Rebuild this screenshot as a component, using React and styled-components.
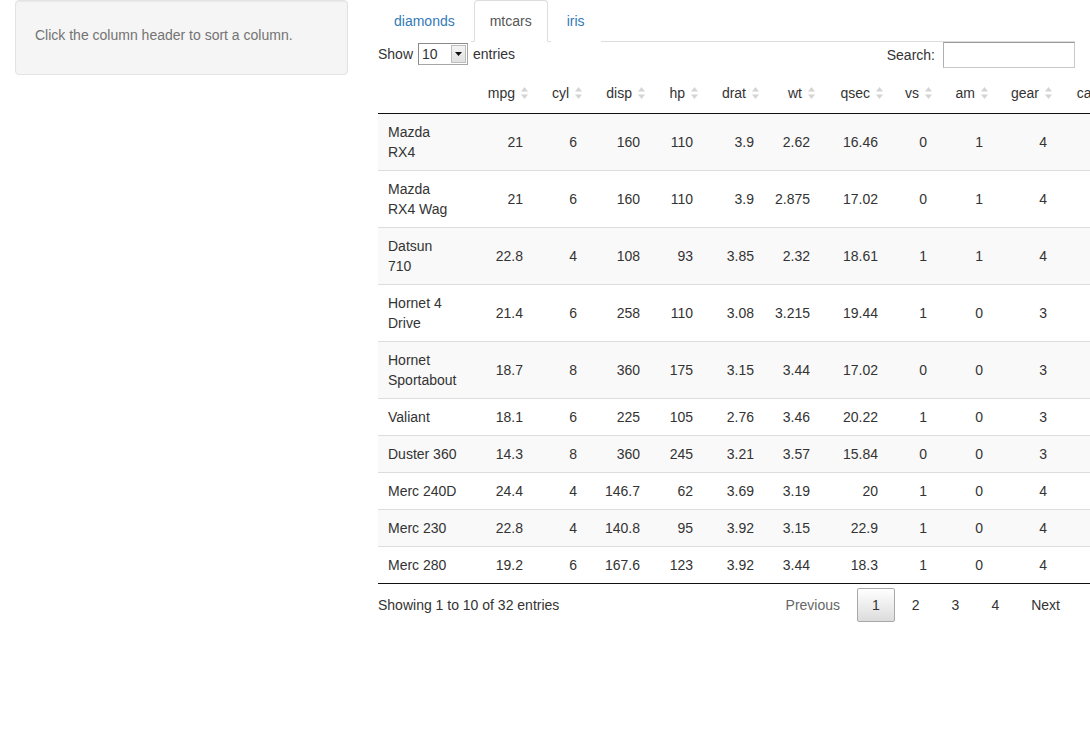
import styled, { createGlobalStyle } from "styled-components";

const GlobalStyle = createGlobalStyle`
  html, body {
    margin: 0;
    padding: 0;
    overflow: hidden;
    background: #fff;
  }
  body {
    font-family: "Liberation Sans", Helvetica, Arial, sans-serif;
    font-size: 14px;
    line-height: 20px;
    color: #333;
  }
`;

const Page = styled.div`
  display: grid;
  grid-template-columns: 333px 697px;
  column-gap: 30px;
  padding: 0 15px;
  align-items: start;
`;

const Well = styled.div`
  background: #f5f5f5;
  border: 1px solid #e3e3e3;
  border-radius: 4px;
  box-shadow: inset 0 1px 1px rgba(0, 0, 0, 0.05);
  padding: 19px;
`;

const HelpText = styled.span`
  display: block;
  margin: 5px 0 10px;
  color: #737373;
`;

const Main = styled.div`
  min-width: 0;
`;

const Tabs = styled.ul`
  display: flex;
  list-style: none;
  margin: 0;
  padding: 0;
  border-bottom: 1px solid #ddd;
`;

const Tab = styled.li`
  margin-bottom: -1px;
  margin-right: 3px;
  padding: 10px 15px;
  border: 1px solid ${(p) => (p.$active ? "#ddd" : "transparent")};
  border-bottom-color: transparent;
  border-radius: 4px 4px 0 0;
  background: #fff;
  color: ${(p) => (p.$active ? "#555" : "#337ab7")};
  cursor: pointer;
`;

const Controls = styled.div`
  display: flex;
  justify-content: space-between;
  align-items: flex-start;
  height: 31px;
`;

const Length = styled.div`
  display: flex;
  align-items: center;
  gap: 5px;
  height: 24px;
`;

const FakeSelect = styled.div`
  display: flex;
  align-items: center;
  justify-content: space-between;
  box-sizing: border-box;
  width: 50px;
  height: 22px;
  border: 1px solid #a6a6a6;
  border-top-color: #8a8a8a;
  border-left-color: #8a8a8a;
  background: #fff;
  padding: 0 1px 0 3px;
`;

const SelectArrow = styled.span`
  display: flex;
  align-items: center;
  justify-content: center;
  width: 15px;
  height: 18px;
  background: linear-gradient(#f4f4f4, #e0e0e0);
  border: 1px solid #bdbdbd;
  box-sizing: border-box;
`;

const Filter = styled.label`
  display: flex;
  align-items: center;
  gap: 8px;
  height: 26px;
`;

const SearchInput = styled.input`
  box-sizing: border-box;
  width: 132px;
  height: 26px;
  border: 1px solid #c8c8c8;
  border-top-color: #9a9a9a;
  border-left-color: #b0b0b0;
  outline: none;
  font: inherit;
`;

const Table = styled.table`
  table-layout: fixed;
  border-collapse: collapse;
  width: 730px;
  border-bottom: 1px solid #111;
`;

const Th = styled.th`
  padding: 10px 5px 10px 10px;
  font-weight: normal;
  text-align: right;
  border-bottom: 1px solid #111;
  white-space: nowrap;
`;

const HeadInner = styled.span`
  display: flex;
  justify-content: flex-end;
  align-items: center;
  gap: 6px;
`;

const Row = styled.tr`
  background: ${(p) => (p.$odd ? "#f9f9f9" : "#fff")};
`;

const Td = styled.td`
  padding: 8px 10px;
  border-top: 1px solid #ddd;
  text-align: ${(p) => (p.$name ? "left" : "right")};
  vertical-align: middle;
`;

const Footer = styled.div`
  display: flex;
  justify-content: space-between;
  align-items: flex-start;
`;

const Info = styled.div`
  padding-top: 11px;
`;

const Pager = styled.div`
  display: flex;
  padding-top: 4px;
`;

const PageButton = styled.span`
  padding: 6px 14px;
  margin-left: 2px;
  border: 1px solid ${(p) => (p.$current ? "#a8a8a8" : "transparent")};
  border-radius: 2px;
  color: ${(p) => (p.$disabled ? "#666" : "#333")};
  background: ${(p) =>
    p.$current ? "linear-gradient(#fff 0%, #dcdcdc 100%)" : "transparent"};
  cursor: pointer;
`;

const SortIcon = () => (
  <svg width="7" height="12" viewBox="0 0 7 12">
    <polygon points="3.5,0 7,4.5 0,4.5" fill="#d4d4d4" />
    <polygon points="0,7.5 7,7.5 3.5,12" fill="#d4d4d4" />
  </svg>
);

const columns = [
  { key: "mpg", width: 65 },
  { key: "cyl", width: 54 },
  { key: "disp", width: 63 },
  { key: "hp", width: 53 },
  { key: "drat", width: 61 },
  { key: "wt", width: 56 },
  { key: "qsec", width: 68 },
  { key: "vs", width: 49 },
  { key: "am", width: 56 },
  { key: "gear", width: 64 },
  { key: "carb", width: 65 },
];

const rows = [
  ["Mazda RX4", 21, 6, 160, 110, 3.9, 2.62, 16.46, 0, 1, 4, 4],
  ["Mazda RX4 Wag", 21, 6, 160, 110, 3.9, 2.875, 17.02, 0, 1, 4, 4],
  ["Datsun 710", 22.8, 4, 108, 93, 3.85, 2.32, 18.61, 1, 1, 4, 1],
  ["Hornet 4 Drive", 21.4, 6, 258, 110, 3.08, 3.215, 19.44, 1, 0, 3, 1],
  ["Hornet Sportabout", 18.7, 8, 360, 175, 3.15, 3.44, 17.02, 0, 0, 3, 2],
  ["Valiant", 18.1, 6, 225, 105, 2.76, 3.46, 20.22, 1, 0, 3, 1],
  ["Duster 360", 14.3, 8, 360, 245, 3.21, 3.57, 15.84, 0, 0, 3, 4],
  ["Merc 240D", 24.4, 4, 146.7, 62, 3.69, 3.19, 20, 1, 0, 4, 2],
  ["Merc 230", 22.8, 4, 140.8, 95, 3.92, 3.15, 22.9, 1, 0, 4, 2],
  ["Merc 280", 19.2, 6, 167.6, 123, 3.92, 3.44, 18.3, 1, 0, 4, 4],
];

const App = () => {
  return (
    <>
      <GlobalStyle />
      <Page>
        <Well>
          <HelpText>Click the column header to sort a column.</HelpText>
        </Well>
        <Main>
          <Tabs>
            <Tab>diamonds</Tab>
            <Tab $active>mtcars</Tab>
            <Tab>iris</Tab>
          </Tabs>
          <Controls>
            <Length>
              Show
              <FakeSelect>
                10
                <SelectArrow>
                  <svg width="7" height="4" viewBox="0 0 7 4">
                    <polygon points="0,0 7,0 3.5,4" fill="#111" />
                  </svg>
                </SelectArrow>
              </FakeSelect>
              entries
            </Length>
            <Filter>
              Search:
              <SearchInput type="text" />
            </Filter>
          </Controls>
          <Table>
            <colgroup>
              <col style={{ width: 90 }} />
              {columns.map((c) => (
                <col key={c.key} style={{ width: c.width }} />
              ))}
            </colgroup>
            <thead>
              <tr>
                <Th />
                {columns.map((c) => (
                  <Th key={c.key}>
                    <HeadInner>
                      {c.key}
                      <SortIcon />
                    </HeadInner>
                  </Th>
                ))}
              </tr>
            </thead>
            <tbody>
              {rows.map((r, i) => (
                <Row key={r[0]} $odd={i % 2 === 0}>
                  <Td $name>{r[0]}</Td>
                  {r.slice(1).map((v, j) => (
                    <Td key={j}>{v}</Td>
                  ))}
                </Row>
              ))}
            </tbody>
          </Table>
          <Footer>
            <Info>Showing 1 to 10 of 32 entries</Info>
            <Pager>
              <PageButton $disabled>Previous</PageButton>
              <PageButton $current>1</PageButton>
              <PageButton>2</PageButton>
              <PageButton>3</PageButton>
              <PageButton>4</PageButton>
              <PageButton>Next</PageButton>
            </Pager>
          </Footer>
        </Main>
      </Page>
    </>
  );
};

export default App;
